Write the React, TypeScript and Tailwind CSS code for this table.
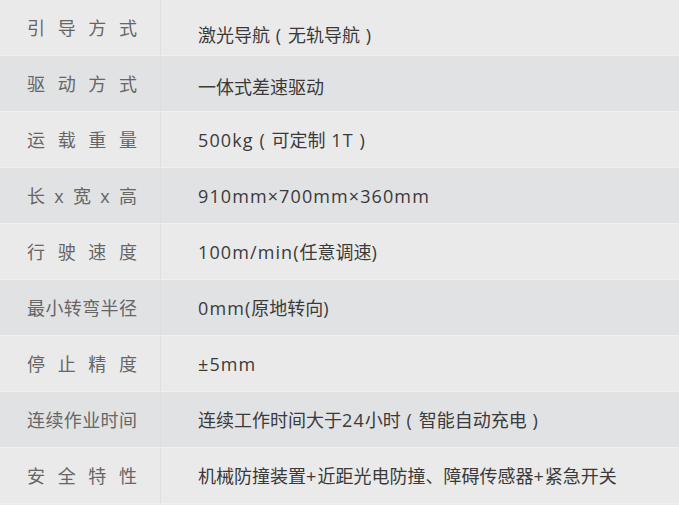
import React from "react";

const rows: { label: string[]; value: string }[] = [
  { label: ["引", "导", "方", "式"], value: "激光导航 ( 无轨导航 )" },
  { label: ["驱", "动", "方", "式"], value: "一体式差速驱动" },
  { label: ["运", "载", "重", "量"], value: "500kg ( 可定制 1T )" },
  { label: ["长", "x", "宽", "x", "高"], value: "910mm×700mm×360mm" },
  { label: ["行", "驶", "速", "度"], value: "100m/min(任意调速)" },
  { label: ["最", "小", "转", "弯", "半", "径"], value: "0mm(原地转向)" },
  { label: ["停", "止", "精", "度"], value: "±5mm" },
  { label: ["连", "续", "作", "业", "时", "间"], value: "连续工作时间大于24小时 ( 智能自动充电 )" },
  { label: ["安", "全", "特", "性"], value: "机械防撞装置+近距光电防撞、障碍传感器+紧急开关" },
];

function splitRuns(text: string) {
  const runs: { cjk: boolean; t: string }[] = [];
  for (const ch of text) {
    const cjk = /[\u3000-\u9fff\uff00-\uffef]/.test(ch);
    const last = runs[runs.length - 1];
    if (last && last.cjk === cjk) last.t += ch;
    else runs.push({ cjk, t: ch });
  }
  return runs;
}

export default function App() {
  return (
    <div
      className="w-[679px] h-[505px] bg-[#ebebeb] overflow-hidden"
      style={{ fontFamily: '"Open Sans", "Noto Sans CJK SC", sans-serif' }}
    >
      {rows.map((r, i) => (
        <div
          key={i}
          className={`flex h-[56px] border-b border-[#f0f0f0] ${
            i % 2 === 0 ? "bg-[#eaeaea]" : "bg-[#e1e2e4]"
          }`}
        >
          <div className="w-[161px] shrink-0 border-r border-[#dedede] flex items-center pl-[27px]">
            <div className="w-[110px] flex justify-between text-[18px] leading-none text-[#666666]">
              {r.label.map((c, j) => (
                <span key={j}>{c}</span>
              ))}
            </div>
          </div>
          <div
            className={`flex-1 flex items-center pl-[37px] text-[18px] leading-none text-[#3a3a3a] whitespace-pre ${
              i === 0 ? "pt-[14px]" : i === 1 ? "pt-[6px]" : ""
            }`}
          >
            <span>
              {splitRuns(r.value).map((run, k) =>
                run.cjk ? (
                  <span key={k}>{run.t}</span>
                ) : (
                  <span key={k} className="tracking-[1.1px]">
                    {run.t}
                  </span>
                )
              )}
            </span>
          </div>
        </div>
      ))}
    </div>
  );
}
